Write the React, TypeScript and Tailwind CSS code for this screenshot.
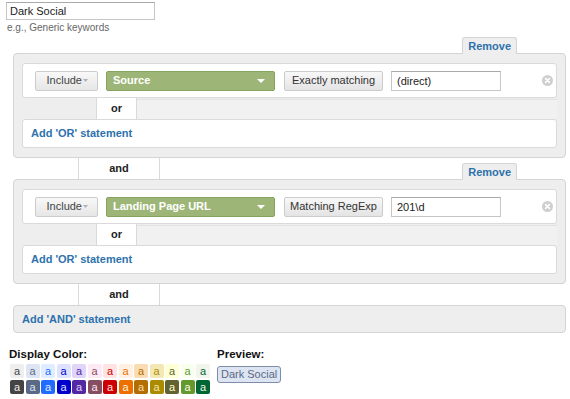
import React from 'react';

const palette: [string, string][] = [
    ['#eeeeee', '#444444'],
    ['#dee5f2', '#5a6986'],
    ['#e0ecff', '#206cff'],
    ['#dfe2ff', '#0000cc'],
    ['#e0d5f9', '#5229a3'],
    ['#fde9f4', '#854f61'],
    ['#ffe3e3', '#cc0000'],
    ['#fff0e1', '#ec7000'],
    ['#fadcb3', '#b36d00'],
    ['#f3e7b3', '#ab8b00'],
    ['#ffffd4', '#636330'],
    ['#f9ffef', '#64992c'],
    ['#f1f5ec', '#006633'],
];

const ClearIcon = () => (
    <svg width="11" height="11" viewBox="0 0 11 11">
        <circle cx="5.5" cy="5.5" r="5.5" fill="#cfcfcf" />
        <path d="M3.6 3.6 L7.4 7.4 M7.4 3.6 L3.6 7.4" stroke="#fff" strokeWidth="1.5" strokeLinecap="round" />
    </svg>
);

const RemoveTab = () => (
    <div className="relative z-10 -mb-px h-[17px] rounded-t-[3px] border border-b-0 border-[#d4d4d4] bg-[#eeeeee] px-[5px] text-[11px] font-bold leading-[16px] text-[#2d72ad]">
        Remove
    </div>
);

interface ConditionProps {
    dimension: string;
    matchType: string;
    value: string;
}

const ConditionBox: React.FC<ConditionProps> = ({ dimension, matchType, value }) => {
    return (
        <div className="rounded-[4px] border border-[#d4d4d4] bg-[#eeeeee] px-[8px] py-[9px]">
            <div className="flex h-[35px] items-center rounded-[3px] border border-[#dadada] bg-white pl-[12px]">
                <button className="flex h-[20px] w-[63px] items-center justify-end rounded-[2px] border border-[#cccccc] bg-gradient-to-b from-[#f8f8f8] to-[#e6e6e6] pr-[9px] text-[11px] text-[#444444]">
                    Include
                    <svg width="5" height="3" viewBox="0 0 5 3" className="ml-px">
                        <path d="M0 0 L5 0 L2.5 3 Z" fill="#b0b0b0" />
                    </svg>
                </button>
                <button className="ml-[8px] flex h-[20px] w-[169px] items-center justify-between rounded-[2px] border border-[#86a35f] bg-[#9db677] pl-[6px] pr-[9px] text-[11px] font-bold text-white">
                    {dimension}
                    <svg width="8" height="4" viewBox="0 0 8 4">
                        <path d="M0 0 L8 0 L4 4 Z" fill="#ffffff" />
                    </svg>
                </button>
                <button className="ml-[9px] h-[20px] w-[99px] rounded-[2px] border border-[#cccccc] bg-gradient-to-b from-[#f8f8f8] to-[#e4e4e4] text-[11px] text-[#333333]">
                    {matchType}
                </button>
                <input
                    readOnly
                    value={value}
                    className="ml-[8px] h-[20px] w-[110px] border border-[#c6c6c6] border-t-[#a9a9a9] px-[5px] text-[11px] text-[#222222] outline-none"
                />
                <div className="ml-[41px] flex items-center">
                    <ClearIcon />
                </div>
            </div>
            <div className="flex h-[21px]">
                <div className="w-[74px]" />
                <div className="flex w-[41px] items-center justify-center border-x border-[#dadada] bg-white text-[11px] font-bold text-[#222222]">
                    or
                </div>
                <div className="mt-px flex-1 rounded-tl-[2px] border-t border-[#e2e2e2] bg-[#f1f1f1]" />
            </div>
            <div className="flex h-[29px] items-center rounded-[3px] border border-[#dadada] bg-white pl-[8px] text-[11px] font-bold text-[#2d72ad]">
                Add 'OR' statement
            </div>
        </div>
    );
};

const AndRow: React.FC<{ withTab?: boolean }> = ({ withTab }) => (
    <div className="flex h-[21px] items-end">
        <div className="ml-[65px] flex h-[21px] w-[82px] items-center justify-center self-start border-x border-[#dadada] bg-white text-[11px] font-bold text-[#222222]">
            and
        </div>
        <div className="flex-1" />
        {withTab && (
            <div className="mr-[49px]">
                <RemoveTab />
            </div>
        )}
    </div>
);

export default function App() {
    return (
        <div className="h-[399px] w-[570px] overflow-hidden bg-white font-['Liberation_Sans',Arial,sans-serif]">
            <div className="pl-[6px] pt-[2px]">
                <input
                    readOnly
                    value="Dark Social"
                    className="block h-[18px] w-[149px] border border-[#c6c6c6] border-t-[#a9a9a9] px-[3px] text-[11px] text-[#222222] outline-none"
                />
                <div className="ml-px mt-[2px] text-[10px] leading-[12px] text-[#666666]">e.g., Generic keywords</div>
            </div>

            <div className="ml-[13px] mr-[4px] mt-[3px]">
                <div className="flex justify-end pr-[49px]">
                    <RemoveTab />
                </div>
                <ConditionBox dimension="Source" matchType="Exactly matching" value="(direct)" />
                <AndRow withTab />
                <ConditionBox dimension="Landing Page URL" matchType="Matching RegExp" value="201\d" />
                <AndRow />
                <div className="flex h-[28px] items-center rounded-[4px] border border-[#d4d4d4] bg-[#eeeeee] pl-[8px] text-[11px] font-bold text-[#2d72ad]">
                    Add 'AND' statement
                </div>
            </div>

            <div className="mt-[14px] flex pl-[9px]">
                <div>
                    <div className="text-[11.5px] font-bold leading-[14px] text-[#111111]">Display Color:</div>
                    <div className="ml-px mt-[3px] grid grid-cols-[repeat(13,14px)] gap-x-[1.5px] gap-y-[2px]">
                        {palette.map(([light, dark]) => (
                            <div
                                key={'l' + light}
                                className="flex h-[14px] w-[14px] items-center justify-center rounded-[2px] text-[11px] leading-none"
                                style={{ backgroundColor: light, color: dark }}
                            >
                                a
                            </div>
                        ))}
                        {palette.map(([light, dark]) => (
                            <div
                                key={'d' + dark}
                                className="flex h-[14px] w-[14px] items-center justify-center rounded-[2px] text-[11px] leading-none"
                                style={{ backgroundColor: dark, color: light }}
                            >
                                a
                            </div>
                        ))}
                    </div>
                </div>
                <div className="ml-[7px]">
                    <div className="text-[11.5px] font-bold leading-[14px] text-[#111111]">Preview:</div>
                    <div className="mt-[5px] inline-flex h-[17px] items-center rounded-[3px] border border-[#7f8daa] bg-[#dee5f2] px-[3px] text-[11px] text-[#5a6986]">
                        Dark Social
                    </div>
                </div>
            </div>
        </div>
    );
}
